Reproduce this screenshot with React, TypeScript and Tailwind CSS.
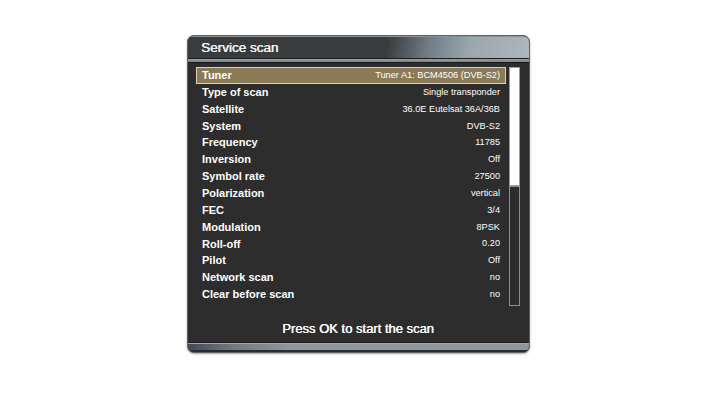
const rows: [string, string][] = [
  ["Tuner", "Tuner A1: BCM4506 (DVB-S2)"],
  ["Type of scan", "Single transponder"],
  ["Satellite", "36.0E Eutelsat 36A/36B"],
  ["System", "DVB-S2"],
  ["Frequency", "11785"],
  ["Inversion", "Off"],
  ["Symbol rate", "27500"],
  ["Polarization", "vertical"],
  ["FEC", "3/4"],
  ["Modulation", "8PSK"],
  ["Roll-off", "0.20"],
  ["Pilot", "Off"],
  ["Network scan", "no"],
  ["Clear before scan", "no"],
];

export default function App() {
  return (
    <div className="w-[717px] h-[404px] bg-white pt-[35px] pl-[187px] font-['Liberation_Sans',Arial,sans-serif]">
      <div className="w-[343px] h-[318px] rounded-[7px] border border-[#5d6267] bg-[#2d2d2d] flex flex-col overflow-hidden shadow-[0_1px_2px_rgba(0,0,0,0.35)]">
        {/* title bar */}
        <div className="h-[22px] flex items-center pl-[13px] border-t border-[#8d9297] bg-[linear-gradient(100deg,#3a3b3d_0%,#3a3b3d_58%,#6f7b85_70%,#9aa6ae_82%,#aeb6bc_100%)]">
          <span className="text-[13.5px] leading-none text-[#f2f2f2] [text-shadow:0.4px_0_0_#f2f2f2]">Service scan</span>
        </div>
        <div className="h-[1px] bg-[#1c1c1c]" />
        <div className="h-[3px] bg-[linear-gradient(180deg,#9ba0a4,#7d8286)]" />
        <div className="h-[1px] bg-[#1a1a1a]" />

        {/* body */}
        <div className="flex-1 flex flex-col pl-[8px] pr-[9px] pt-[4px]">
          <div className="flex gap-[3px]">
            <div className="w-[310px] flex flex-col">
              {rows.map(([label, value], i) => (
                <div
                  key={label}
                  className={
                    i === 0
                      ? "h-[17px] flex items-center justify-between pl-[5px] pr-[5px] bg-[#8a7a56] border border-[#d9d2bd] text-white"
                      : "h-[16.85px] flex items-center justify-between pl-[6px] pr-[6px] text-white"
                  }
                >
                  <span className="text-[11px] font-bold leading-none">{label}</span>
                  <span className="text-[9.2px] leading-none">{value}</span>
                </div>
              ))}
            </div>
            <div className="w-[11px] h-[239px] flex flex-col">
              <div className="h-[119px] bg-white border border-[#9a9a9a]" />
              <div className="flex-1 border border-[#8e8e8e] bg-[#2d2d2d]" />
            </div>
          </div>
          <div className="flex-1 flex items-center justify-center pt-[8px]">
            <span className="text-[13px] leading-none text-white [text-shadow:0.45px_0_0_#ffffff]">Press OK to start the scan</span>
          </div>
        </div>

        {/* bottom bar */}
        <div className="h-[1px] bg-[#1a1a1a]" />
        <div className="h-[1px] bg-[#a3a8ac]" />
        <div className="h-[8px] bg-[linear-gradient(100deg,#3d4a57_0%,#6b7780_12%,#8e979e_30%,#8e979e_100%)] border-b-2 border-[#2a2c2e]" />
      </div>
    </div>
  );
}
